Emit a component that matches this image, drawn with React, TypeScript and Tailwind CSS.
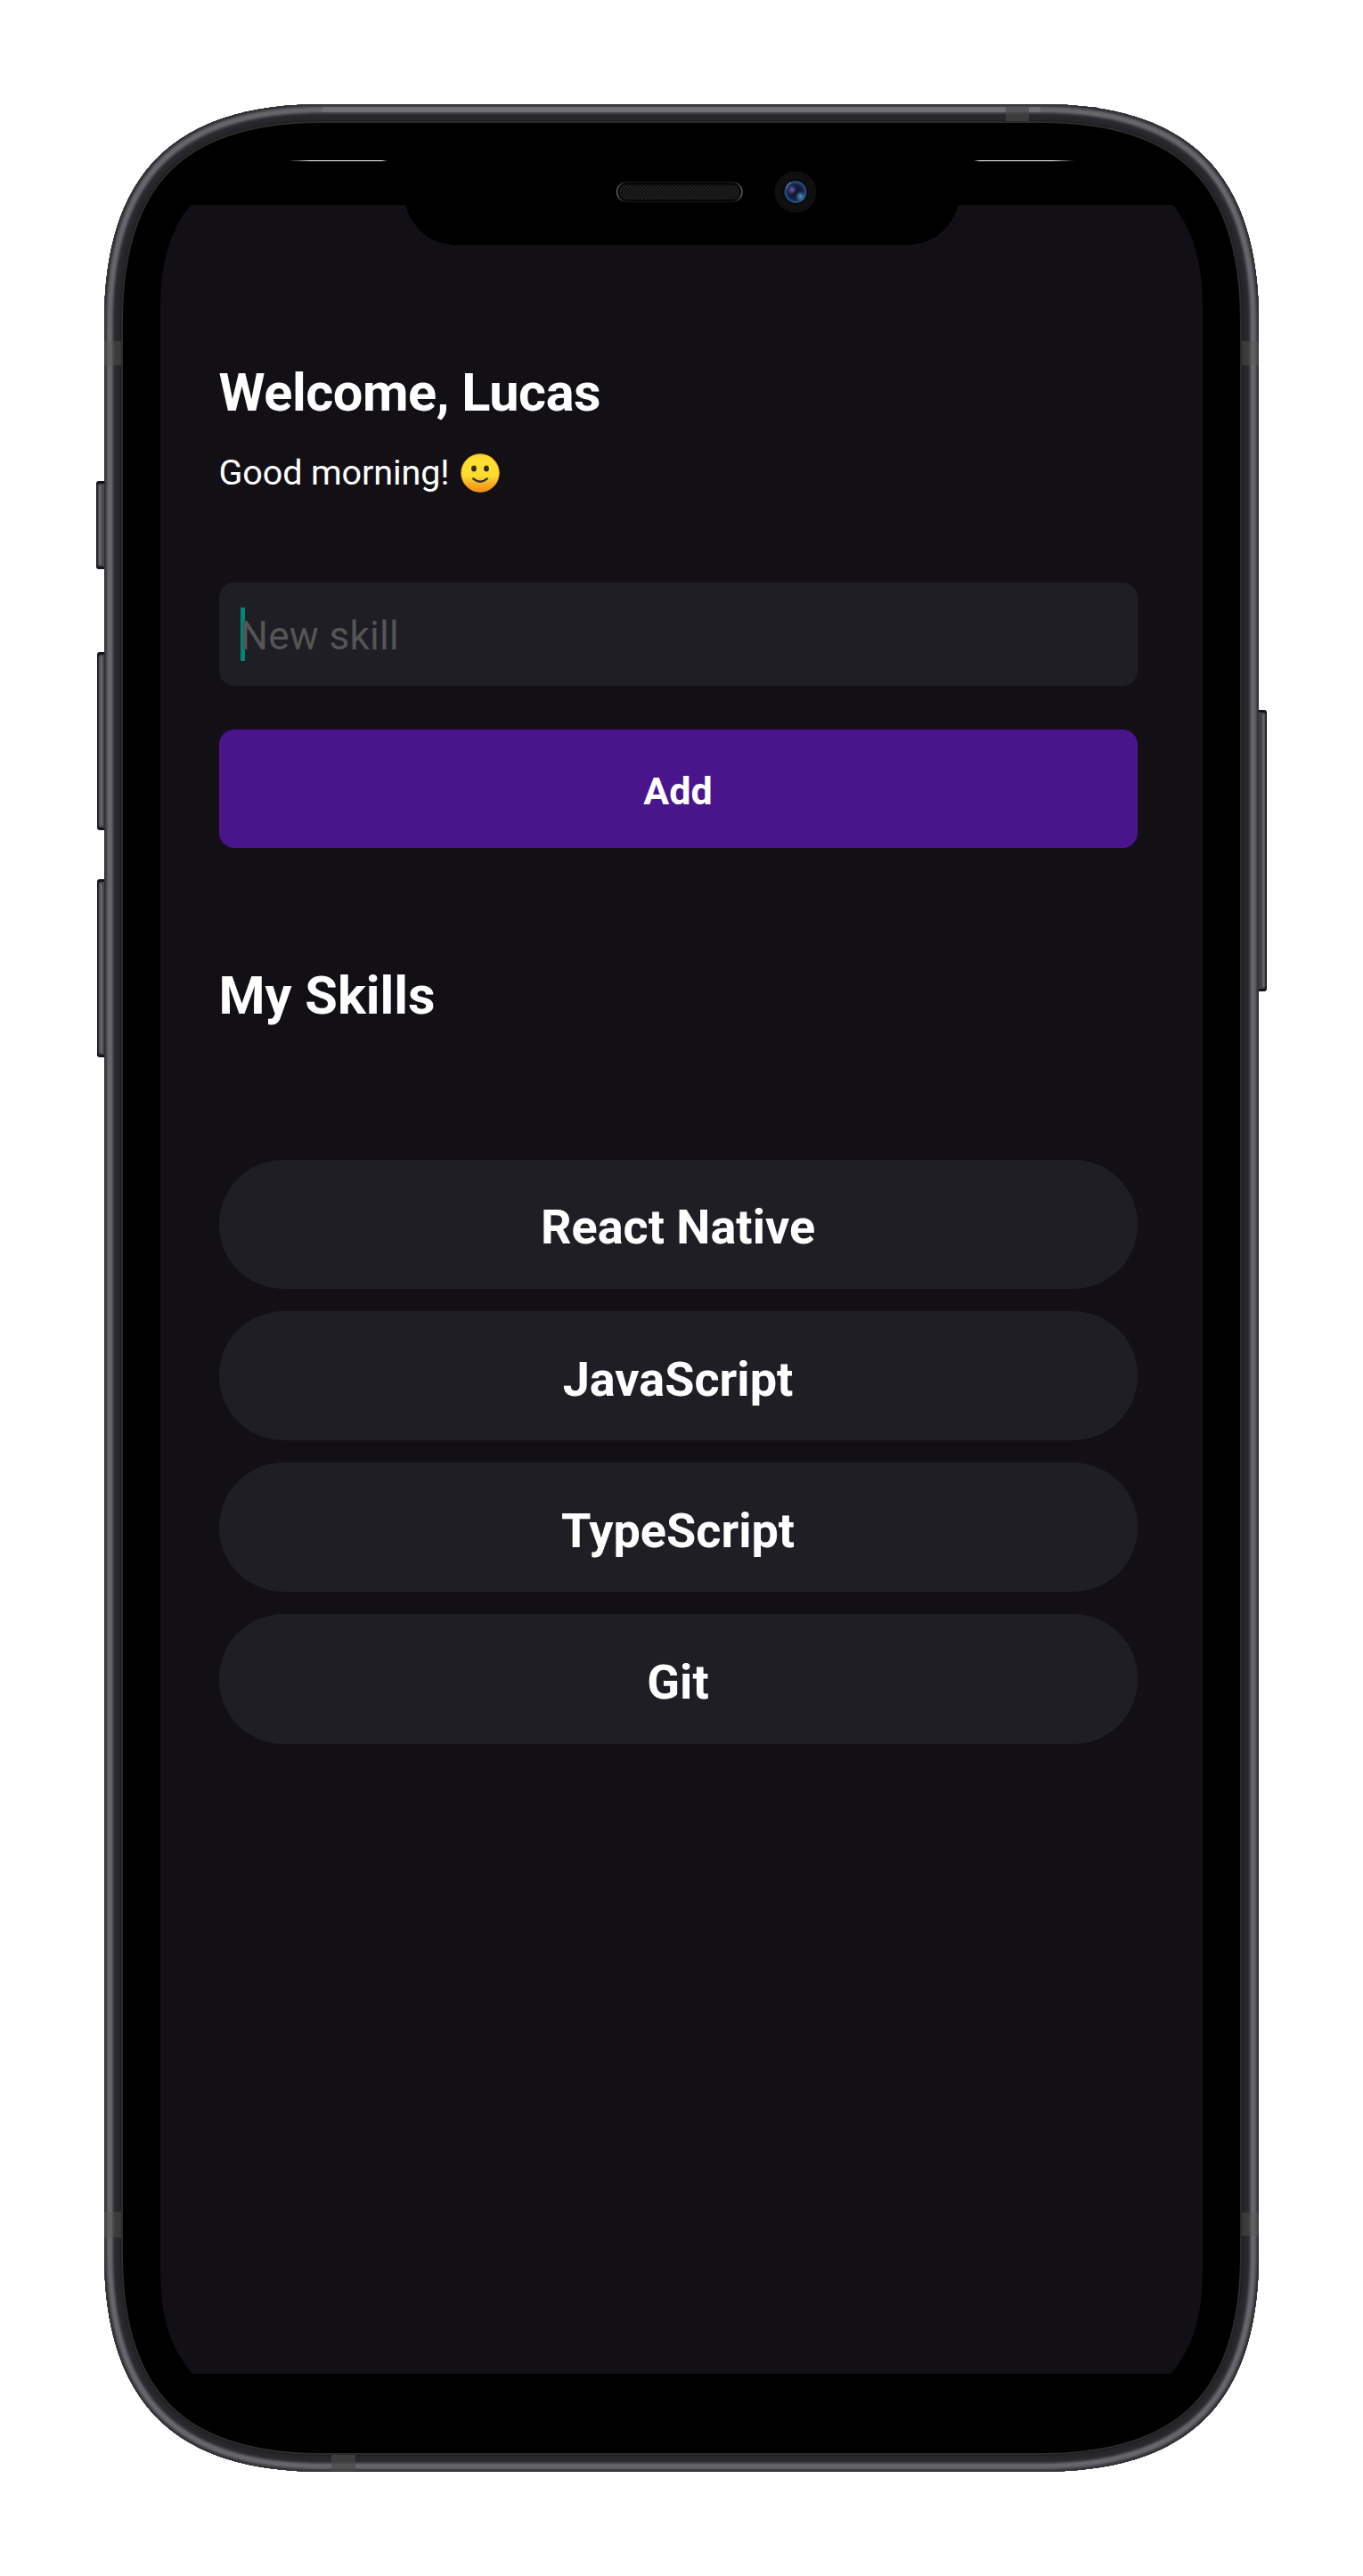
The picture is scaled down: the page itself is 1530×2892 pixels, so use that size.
import React, { useState } from "react";

const BODY =
  "M117 362C117 195.4 195.4 117 362 117H1168C1334.6 117 1413 195.4 1413 362V2530C1413 2696.6 1334.6 2775 1168 2775H362C195.4 2775 117 2696.6 117 2530Z";
const DISPLAY =
  "M214 230H455C463 257 483 275 514 275H1016C1047 275 1068 257 1076 230H1316.5C1340 260 1350 296 1350 345V2545C1350 2603 1339 2635 1314.5 2665H216C191 2635 180 2603 180 2545V345C180 296 190 260 214 230Z";

// Metal rim, listed from the deepest ring outwards: [depth, colour].
const RINGS: [number, string][] = [
  [21, "#2b2b2a"],
  [19, "#1e1e20"],
  [18, "#25252a"],
  [15, "#28282d"],
  [12, "#2f2f34"],
  [11, "#3a3a3f"],
  [10, "#4a4a4f"],
  [9, "#5c5c61"],
  [8, "#66666b"],
  [5, "#626267"],
  [4, "#55555a"],
  [3, "#45454a"],
  [2, "#3a3a3d"],
  [1, "#2f2f31"],
];

function SideKey({ x, y, w, h, flip }: { x: number; y: number; w: number; h: number; flip?: boolean }) {
  return (
    <g>
      <rect x={x} y={y} width={w + 4} height={h} rx="3" fill="#14141a" />
      <rect x={flip ? x : x + 1.5} y={y + 3} width={w + 2.5} height={h - 6} rx="2" fill="#47474c" />
      <rect x={flip ? x + 7.5 : x + 3} y={y + 5} width="3" height={h - 10} rx="1" fill="#626267" />
    </g>
  );
}

function PhoneFrame() {
  return (
    <svg className="pointer-events-none absolute inset-0" width="1530" height="2892" viewBox="0 0 1530 2892" aria-hidden="true">
      <defs>
        <clipPath id="body">
          <path d={BODY} />
        </clipPath>
        <linearGradient id="glintL">
          <stop offset="0" stopColor="#fff" stopOpacity="0" />
          <stop offset=".22" stopColor="#fff" />
          <stop offset=".94" stopColor="#fff" />
          <stop offset="1" stopColor="#fff" stopOpacity="0" />
        </linearGradient>
        <linearGradient id="glintR">
          <stop offset="0" stopColor="#fff" stopOpacity="0" />
          <stop offset=".06" stopColor="#fff" />
          <stop offset=".78" stopColor="#fff" />
          <stop offset="1" stopColor="#fff" stopOpacity="0" />
        </linearGradient>
        <linearGradient id="speakerEdge">
          <stop offset="0" stopColor="#606060" />
          <stop offset=".06" stopColor="#141414" />
          <stop offset=".94" stopColor="#141414" />
          <stop offset="1" stopColor="#606060" />
        </linearGradient>
        <pattern id="mesh" width="4" height="4" patternUnits="userSpaceOnUse">
          <rect width="4" height="4" fill="#1d1d1d" />
          <rect width="2" height="2" fill="#121212" />
          <rect x="2" y="2" width="2" height="2" fill="#121212" />
        </pattern>
        <radialGradient id="lens">
          <stop offset="0" stopColor="#0b1024" />
          <stop offset=".65" stopColor="#14213f" />
          <stop offset="1" stopColor="#2b568f" />
        </radialGradient>
        <radialGradient id="lensViolet">
          <stop offset="0" stopColor="#7a55b4" />
          <stop offset="1" stopColor="#7a55b4" stopOpacity="0" />
        </radialGradient>
        <radialGradient id="lensCyan">
          <stop offset="0" stopColor="#4b96bb" />
          <stop offset="1" stopColor="#4b96bb" stopOpacity="0" />
        </radialGradient>
      </defs>

      <SideKey x={108} y={540} w={9} h={99} />
      <SideKey x={109} y={732} w={8} h={200} />
      <SideKey x={109} y={987} w={8} h={200} />
      <SideKey x={1409} y={797} w={9} h={316} flip />
      <rect x="1413" y="801" width="4" height="308" fill="#3f3f44" />

      <path fillRule="evenodd" d={BODY + DISPLAY} fill="#000" />
      <g clipPath="url(#body)" fill="none">
        {RINGS.map(([depth, color]) => (
          <path key={depth} d={BODY} stroke={color} strokeWidth={depth * 2} />
        ))}
        <rect x="362" y="120" width="806" height="6" fill="#77777c" opacity=".6" />
        <g fill="#5b5b59" opacity=".4">
          <rect x="117" y="383" width="19" height="27" />
          <rect x="1394" y="383" width="19" height="27" />
          <rect x="117" y="2483" width="19" height="29" />
          <rect x="1394" y="2484" width="19" height="26" />
        </g>
        <g fill="#484848" opacity=".65">
          <rect x="1129" y="119" width="26" height="17" />
          <rect x="372" y="2756" width="27" height="18" />
        </g>
      </g>

      <rect x="324" y="180" width="111" height="1" fill="url(#glintL)" />
      <rect x="1093" y="180" width="113" height="1" fill="url(#glintR)" />

      <rect x="692.5" y="204.5" width="140.5" height="22" rx="11" fill="#050505" stroke="url(#speakerEdge)" strokeWidth="1.4" />
      <rect x="695" y="207.5" width="135.5" height="16.5" rx="8" fill="url(#mesh)" />

      <circle cx="893" cy="215.5" r="23.3" fill="#0f0f0f" />
      <circle cx="893" cy="215.5" r="14" fill="#070707" />
      <circle cx="893" cy="215.5" r="12.5" fill="url(#lens)" />
      <circle cx="889" cy="213" r="5.5" fill="url(#lensViolet)" />
      <circle cx="898.5" cy="220.5" r="6" fill="url(#lensCyan)" />
      <path d="M882.5 211A12 12 0 0 1 888 204.5" stroke="#6e8394" strokeWidth="1.6" fill="none" opacity=".7" />
    </svg>
  );
}

function Smile() {
  return (
    <svg className="shrink-0" width="44" height="44" viewBox="0 0 44 44" aria-label="slightly smiling face">
      <defs>
        <linearGradient id="face" x1="0" y1="0" x2="0" y2="1">
          <stop offset="0" stopColor="#fcd52d" />
          <stop offset=".2" stopColor="#fee032" />
          <stop offset=".58" stopColor="#fddc2f" />
          <stop offset=".8" stopColor="#f8ab22" />
          <stop offset="1" stopColor="#f18d18" />
        </linearGradient>
      </defs>
      <circle cx="22" cy="22" r="21.3" fill="url(#face)" stroke="#ee9a1c" strokeWidth=".9" />
      <ellipse cx="15" cy="17" rx="2.9" ry="3.5" fill="#2f2d25" />
      <ellipse cx="29" cy="17" rx="2.9" ry="3.5" fill="#2f2d25" />
      <path d="M14.2 28.4Q22 35.2 29.8 28.4" fill="none" stroke="#2f2d25" strokeWidth="2.3" strokeLinecap="round" />
    </svg>
  );
}

const SKILLS = ["React Native", "JavaScript", "TypeScript", "Git"];

export default function App() {
  const [skills, setSkills] = useState(SKILLS);
  const [draft, setDraft] = useState("");

  const add = () => {
    if (!draft.trim()) return;
    setSkills([...skills, draft.trim()]);
    setDraft("");
  };

  return (
    <div className="relative h-[2892px] w-[1530px] overflow-hidden bg-white px-[180px] pt-[230px] font-['Roboto',sans-serif] text-white">
      <main className="flex h-[2435px] flex-col bg-[#121015] pt-[176px] pr-[73.5px] pl-[65.5px]">
        <h1 className="h-[70px] text-[59.5px] leading-[70px] font-bold tracking-[-0.45px] whitespace-nowrap">Welcome, Lucas</h1>
        <div className="mt-[31px] flex h-12 items-center">
          <p className="w-[271px] text-[39.5px] leading-[48px] tracking-[-0.1px] whitespace-nowrap">Good morning!</p>
          <Smile />
        </div>

        <div className="relative mt-[99px] h-[115.7px] rounded-[17px] bg-[#1f1e25]">
          <span className="absolute top-[27.5px] left-[24.5px] h-[60.5px] w-[5px] bg-[#008577]" />
          <input
            value={draft}
            onChange={(e) => setDraft(e.target.value)}
            placeholder="New skill"
            className="relative h-full w-full bg-transparent px-[24px] pt-[5px] text-[44px] tracking-[0.3px] outline-none placeholder:text-[#555555] placeholder:opacity-100"
          />
        </div>
        <button onClick={add} className="mt-[49.3px] flex h-[132.7px] items-center justify-center rounded-[17px] bg-[#4a148c] pt-[5px] text-[43px] font-bold">
          Add
        </button>

        <h2 className="mt-[131.5px] h-[70px] text-[59.5px] leading-[70px] font-bold">My Skills</h2>
        <ul className="mt-[148.5px] flex flex-col gap-[24.5px]">
          {skills.map((skill) => (
            <li key={skill} className="flex h-[145.6px] items-center justify-center rounded-[72px] bg-[#1f1e25] pt-[7px] text-[54px] font-bold">
              {skill}
            </li>
          ))}
        </ul>
      </main>
      <PhoneFrame />
    </div>
  );
}
